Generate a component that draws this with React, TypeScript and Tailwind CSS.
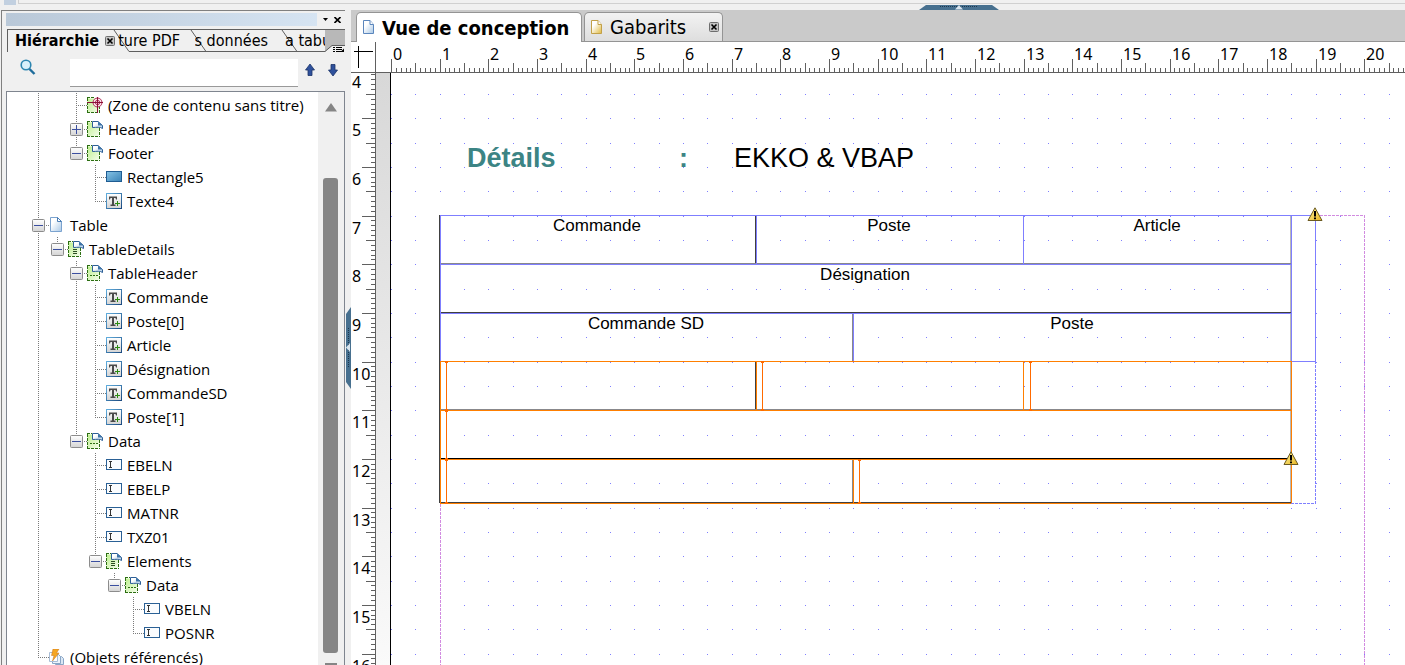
import React from "react";

type IconKind = "zone" | "subform" | "page" | "table" | "row" | "rect" | "text" | "field" | "refs";
type Toggle = "plus" | "minus";

interface TreeNode {
  label: string;
  depth: number;
  icon: IconKind;
  toggle?: Toggle;
  last?: boolean;
  through: number[];
}

const NODES: TreeNode[] = [
  { label: "(Zone de contenu sans titre)", depth: 2, icon: "zone", through: [0] },
  { label: "Header", depth: 2, icon: "subform", toggle: "plus", through: [0] },
  { label: "Footer", depth: 2, icon: "subform", toggle: "minus", last: true, through: [0] },
  { label: "Rectangle5", depth: 3, icon: "rect", through: [0] },
  { label: "Texte4", depth: 3, icon: "text", last: true, through: [0] },
  { label: "Table", depth: 0, icon: "page", toggle: "minus", through: [] },
  { label: "TableDetails", depth: 1, icon: "table", toggle: "minus", last: true, through: [0] },
  { label: "TableHeader", depth: 2, icon: "row", toggle: "minus", through: [0] },
  { label: "Commande", depth: 3, icon: "text", through: [0, 2] },
  { label: "Poste[0]", depth: 3, icon: "text", through: [0, 2] },
  { label: "Article", depth: 3, icon: "text", through: [0, 2] },
  { label: "Désignation", depth: 3, icon: "text", through: [0, 2] },
  { label: "CommandeSD", depth: 3, icon: "text", through: [0, 2] },
  { label: "Poste[1]", depth: 3, icon: "text", last: true, through: [0, 2] },
  { label: "Data", depth: 2, icon: "row", toggle: "minus", last: true, through: [0] },
  { label: "EBELN", depth: 3, icon: "field", through: [0] },
  { label: "EBELP", depth: 3, icon: "field", through: [0] },
  { label: "MATNR", depth: 3, icon: "field", through: [0] },
  { label: "TXZ01", depth: 3, icon: "field", through: [0] },
  { label: "Elements", depth: 3, icon: "table", toggle: "minus", last: true, through: [0] },
  { label: "Data", depth: 4, icon: "row", toggle: "minus", last: true, through: [0] },
  { label: "VBELN", depth: 5, icon: "field", through: [0] },
  { label: "POSNR", depth: 5, icon: "field", last: true, through: [0] },
  { label: "(Objets référencés)", depth: 0, icon: "refs", last: true, through: [] },
];

function Defs() {
  return (
    <svg className="absolute h-0 w-0" aria-hidden="true">
      <defs>
        <linearGradient id="green" x1="0" y1="0" x2="1" y2="1">
          <stop offset="0" stopColor="#bdf08c" />
          <stop offset="1" stopColor="#f6fdee" />
        </linearGradient>
        <linearGradient id="sheet" x1="0" y1="0" x2="1" y2="1">
          <stop offset="0.3" stopColor="#ffffff" />
          <stop offset="1" stopColor="#a9c8e6" />
        </linearGradient>
        <linearGradient id="gold" x1="0" y1="0" x2="1" y2="1">
          <stop offset="0.3" stopColor="#ffffff" />
          <stop offset="1" stopColor="#e0b93c" />
        </linearGradient>
        <linearGradient id="blue" x1="0" y1="0" x2="1" y2="1">
          <stop offset="0" stopColor="#86c3e6" />
          <stop offset="1" stopColor="#3a82b6" />
        </linearGradient>
        <linearGradient id="frame" x1="0" y1="0" x2="1" y2="1">
          <stop offset="0" stopColor="#62aede" />
          <stop offset="1" stopColor="#1b4a80" />
        </linearGradient>
        <linearGradient id="silver" x1="0" y1="0" x2="0" y2="1">
          <stop offset="0" stopColor="#ffffff" />
          <stop offset="1" stopColor="#d4d4d4" />
        </linearGradient>
        <linearGradient id="warn" x1="0" y1="0" x2="1" y2="1">
          <stop offset="0" stopColor="#fff7a0" />
          <stop offset="1" stopColor="#e8b420" />
        </linearGradient>
      </defs>
    </svg>
  );
}

function SubformBase() {
  return (
    <>
      <rect x="0.5" y="1.5" width="12" height="14" fill="url(#green)" />
      <path d="M0 .5H5M.5 1V16M0 15.5H13M12.5 7V15" fill="none" stroke="#2c6e12" strokeDasharray="3 1" shapeRendering="crispEdges" />
      <path d="M5.500 .5H11L15.500 4.500V7.500C13 5.500 10 6.500 5.500 6.500Z" fill="url(#sheet)" stroke="#2d5f96" />
      <path d="M11 .5V4.500H15.500Z" fill="#3d74a8" />
    </>
  );
}

function NodeIcon({ kind }: { kind: IconKind }) {
  return (
    <svg width="16" height="17" viewBox="0 0 16 17" aria-hidden="true" className="shrink-0">
      {kind === "zone" && (
        <>
          <rect x="0.5" y="1.5" width="12" height="14" fill="url(#green)" />
          <path d="M0 .5H7M.5 1V16M0 15.5H13M12.5 9V15" fill="none" stroke="#2c6e12" strokeDasharray="3 1" shapeRendering="crispEdges" />
          <circle cx="10.500" cy="5.500" r="4.500" fill="#f8e3ea" stroke="#b03058" />
          <circle cx="10.500" cy="5.500" r="2.200" fill="none" stroke="#b03058" />
          <path d="M0 5.500H16M10.500 0V16" stroke="#8c1038" fill="none" />
        </>
      )}
      {(kind === "subform" || kind === "table" || kind === "row") && <SubformBase />}
      {kind === "row" && <path d="M3 10.5H5M6 10.5H8M9 10.5H11" stroke="#2c6e12" shapeRendering="crispEdges" />}
      {kind === "table" && (
        <path d="M5 8.5H9M5 10.5H9M5 12.5H9" stroke="#2c4e22" shapeRendering="crispEdges" />
      )}
      {kind === "page" && (
        <>
          <path d="M1.500 .5H8.500L12.500 4.500V14.500H1.500Z" fill="url(#sheet)" stroke="#7ba3cf" />
          <path d="M8.500 .5V4.500H12.500Z" fill="#ffffff" stroke="#4a7db5" />
        </>
      )}
      {kind === "rect" && <rect x="0.5" y="2.500" width="15" height="10" fill="url(#blue)" stroke="#1f5c92" />}
      {kind === "text" && (
        <>
          <rect x="0.5" y="0.5" width="15" height="15" fill="url(#silver)" stroke="url(#frame)" />
          <path d="M3 3.500H11V6.500H10L9.500 5H8V11.500H9.500V13H4.500V11.500H6V5H4.500L4 6.500H3Z" fill="#4a4a4a" />
          <path d="M11.500 8V13M9 10.500H14" stroke="#2b8a10" fill="none" shapeRendering="crispEdges" />
        </>
      )}
      {kind === "field" && (
        <>
          <rect x="0.5" y="2.500" width="15" height="10" fill="#fafcfe" stroke="#2a6095" />
          <path d="M3 4.500H6M3 10.500H6M4.500 5V10" stroke="#333333" fill="none" shapeRendering="crispEdges" />
        </>
      )}
      {kind === "refs" && (
        <>
          <path d="M6.500 7.500H12.500L14.500 9.500V15.500H6.500Z" fill="#dbe8f5" stroke="#8aa6c6" />
          <path d="M3.500 5.500H9.500L11.500 7.500V14.500H3.500Z" fill="#edf4fb" stroke="#8aa6c6" />
          <path d="M.5 3.500H6L8.500 6V12.500H.5Z" fill="#ffffff" stroke="#a8bdd6" />
          <path d="M4 0H10L7.500 4H10L3.500 12L5 6.500H2.500Z" fill="#f5a623" stroke="#c9731a" strokeWidth="0.5" />
        </>
      )}
    </svg>
  );
}

function Guide({ on }: { on: boolean }) {
  return (
    <svg width="19" height="24" aria-hidden="true" className="shrink-0">
      {on && <path d="M9.500 0V24" stroke="#7a7a7a" strokeDasharray="1 1" shapeRendering="crispEdges" />}
    </svg>
  );
}

function Junction({ node }: { node: TreeNode }) {
  const drawing = (
    <svg width="20" height="24" aria-hidden="true">
      <path
        d={`M9.500 0V${node.last ? 12 : 24}M9 12.500H20`}
        fill="none"
        stroke="#7a7a7a"
        strokeDasharray="1 1"
        shapeRendering="crispEdges"
      />
      {node.toggle && (
        <>
          <rect x="3.500" y="6.500" width="12" height="12" rx="1" fill="url(#silver)" stroke="#8c8c8c" />
          <path d={node.toggle === "plus" ? "M5 12.500H14M9.500 8V17" : "M5 12.500H14"} stroke="#3b4fa0" fill="none" />
        </>
      )}
    </svg>
  );
  return node.toggle ? (
    <button type="button" aria-label={node.toggle === "plus" ? `Développer ${node.label}` : `Réduire ${node.label}`} className="shrink-0">
      {drawing}
    </button>
  ) : (
    <span className="shrink-0">{drawing}</span>
  );
}

function Tree() {
  return (
    <ul role="tree" aria-label="Hiérarchie" className="min-w-0 flex-1 pt-px pl-[22px] font-['Open_Sans','Noto_Sans',sans-serif] text-[15px] whitespace-nowrap">
      {NODES.map((node, i) => (
        <li key={i} role="treeitem" aria-level={node.depth + 1} className="flex h-6 items-center">
          {Array.from({ length: node.depth }, (_, level) => (
            <Guide key={level} on={node.through.includes(level)} />
          ))}
          <Junction node={node} />
          <NodeIcon kind={node.icon} />
          <span className="pl-[5px]">{node.label}</span>
        </li>
      ))}
    </ul>
  );
}

function CloseBox() {
  return (
    <svg width="10" height="10" viewBox="0 0 10 10" aria-hidden="true">
      <rect x="0.5" y="0.5" width="9" height="9" rx="1" fill="#c4c4c4" stroke="#6e6e6e" />
      <path d="M2.500 2.500L7.500 7.500M7.500 2.500L2.500 7.500" stroke="#000000" strokeWidth="1.6" />
    </svg>
  );
}

function Sidebar() {
  return (
    <aside className="ml-px flex w-[344px] shrink-0 flex-col border-t border-l border-[#808080] bg-[#f0f0f0] pl-1">
      <div className="mt-0.5 flex h-[13px] items-center">
        <div className="h-full flex-1 bg-linear-to-r from-[#b9c8d8] to-[#d6e4f2]" />
        <button type="button" aria-label="Options du panneau" className="ml-1.5">
          <svg width="5" height="3" aria-hidden="true"><path d="M0 0H5L2.500 3Z" /></svg>
        </button>
        <button type="button" aria-label="Fermer le panneau" className="mr-1 ml-1.5">
          <svg width="7" height="6" viewBox="0 0 7 6" aria-hidden="true"><path d="M.5 0L6.500 6M6.500 0L.5 6" stroke="#000000" strokeWidth="1.6" /></svg>
        </button>
      </div>

      <div className="relative mt-[3px] ml-px flex h-[23px] overflow-hidden border-t border-[#5f5f5f] bg-[#f0f0f0] font-['DejaVu_Sans_Condensed','Noto_Sans',sans-serif] text-base whitespace-nowrap">
        <svg className="absolute inset-0 h-full w-full" aria-hidden="true">
          <path d="M318 0H345V16L326 15L318 22Z" fill="#b8b8b8" />
          <path d="M.5 0V22" stroke="#5f5f5f" />
          <path d="M107 0L122 21.500H318L325 15.500H345M184 0L199 21.500M275 0L290 21.500" fill="none" stroke="#5f5f5f" />
          <path d="M326 17.500H328M329 17.500H335M326 19.500H328M329 19.500H335M326 21.500H328M329 21.500H335" stroke="#000000" shapeRendering="crispEdges" />
          <path d="M337 22V18.500L333.500 22Z" />
        </svg>
        <button type="button" className="relative flex w-[111px] items-center pl-2 font-bold">
          Hiérarchie
        </button>
        <button type="button" className="relative flex w-[62px] items-center justify-end overflow-hidden">ture PDF</button>
        <button type="button" className="relative ml-[15px] flex w-[73px] items-center justify-end overflow-hidden">s données</button>
        <button type="button" className="relative ml-[17px] flex w-[40px] items-center overflow-hidden">a tabu</button>
        <button type="button" aria-label="Fermer Hiérarchie" className="absolute top-1.5 left-[98px]">
          <CloseBox />
        </button>
      </div>

      <div className="flex h-[39px] items-center">
        <svg width="16" height="17" viewBox="0 0 16 17" className="mb-2 ml-[14px]" aria-hidden="true">
          <circle cx="6" cy="6" r="4.800" fill="#d8f0fa" stroke="#2d86b0" strokeWidth="1.600" />
          <path d="M9.500 10L14.500 15" stroke="#1f6d9c" strokeWidth="2.400" />
        </svg>
        <input aria-label="Rechercher" className="mt-0.5 ml-[34px] h-7 w-[228px] border-b border-[#999999] bg-white px-2 outline-none" />
        <button type="button" aria-label="Précédent" className="mb-1 ml-[7px]">
          <svg width="10" height="12" aria-hidden="true"><path d="M5 0L9.500 6H7V11.500H3V6H.5Z" fill="#2f519c" stroke="#1c3268" strokeWidth="0.800" /></svg>
        </button>
        <button type="button" aria-label="Suivant" className="mb-1 ml-[13px]">
          <svg width="10" height="12" aria-hidden="true"><path d="M5 12L9.500 6H7V.5H3V6H.5Z" fill="#2f519c" stroke="#1c3268" strokeWidth="0.800" /></svg>
        </button>
      </div>

      <div className="flex min-h-0 flex-1 overflow-hidden border border-b-0 border-[#7f858f] bg-white">
        <Tree />
        <div className="flex w-[26px] shrink-0 flex-col items-center bg-[#f0f0f0] pt-[11px] pr-px" aria-hidden="true">
          <svg width="12" height="9"><path d="M6 0L12 8.500H0Z" fill="#858585" /></svg>
          <div className="mt-[66px] mb-2.5 w-[15px] flex-1 rounded-[3px] bg-[#858585]" />
          <svg width="12" height="2"><path d="M0 0H12V2H0Z" fill="#858585" /></svg>
        </div>
      </div>
    </aside>
  );
}

function Splitter() {
  return (
    <div className="flex w-[6px] shrink-0 flex-col items-end bg-[#f0f0f0]">
      <svg width="5" height="82" viewBox="0 0 5 82" className="mt-[297px]" aria-hidden="true">
        <path d="M5 0L0 7V75L5 82Z" fill="#47708f" />
        <path d="M2.500 21V60" stroke="#1c3850" strokeDasharray="1 1" />
        <path d="M4 36V45L0 40.500Z" fill="#d8e4ee" />
      </svg>
    </div>
  );
}

const UNIT = 48.66;

const across = (distance: number) => Math.round(distance);
const down = (distance: number) => Math.floor(distance + 0.1);

function tickPath(count: number, snap: (distance: number) => number, draw: (pos: number, size: number) => string) {
  let path = "";
  for (let i = 0; i < count; i++) {
    const size = i % 10 === 0 ? 13 : i % 5 === 0 ? 9 : 4;
    path += draw(snap((i * UNIT) / 10) + 0.5, size);
  }
  return path;
}

function HorizontalRuler() {
  return (
    <svg className="h-[31px] min-w-0 flex-1 border-b border-l border-[#606060]" aria-label="Règle horizontale">
      <g transform="translate(15 0)">
        <path d={tickPath(600, across, (p, s) => `M${p} 30V${30 - s}`)} stroke="#606060" shapeRendering="crispEdges" />
        {Array.from({ length: 21 }, (_, i) => (
          <text key={i} x={across(i * UNIT) + 2} y="18" fontSize="16">{i}</text>
        ))}
      </g>
    </svg>
  );
}

function VerticalRuler() {
  return (
    <svg className="w-[25px] shrink-0 border-r border-[#606060]" aria-label="Règle verticale">
      <g transform="translate(0 -3)">
        <path d={tickPath(500, down, (p, s) => `M24 ${p}H${24 - s}`)} stroke="#606060" shapeRendering="crispEdges" />
        {Array.from({ length: 13 }, (_, i) => (
          <text key={i} x="1" y={down(i * UNIT) + 18} fontSize="16">{i + 4}</text>
        ))}
      </g>
    </svg>
  );
}

function gridDots() {
  let path = "";
  for (let row = 1; row < 50; row++) {
    for (let col = 0; col < 100; col++) {
      path += `M${across((col * UNIT) / 2)} ${down((row * UNIT) / 2) - 2.5}h1`;
    }
  }
  return path;
}

const DOTS = gridDots();

function Warning({ className }: { className: string }) {
  return (
    <svg width="16" height="15" viewBox="0 0 16 15" className={className} role="img" aria-label="Avertissement">
      <path d="M8 .8L15 13.500H1Z" fill="url(#warn)" stroke="#6b5a20" strokeLinejoin="round" />
      <path d="M8 4V9.500M8 10.500V12.300" stroke="#000000" strokeWidth="2" />
    </svg>
  );
}

function FormLines() {
  return (
    <svg className="absolute inset-0 h-full w-full" shapeRendering="crispEdges" fill="none" aria-hidden="true">
      <path d={DOTS} stroke="#7f7fff" />
      <path d="M925 142.500H973.500V2000M49.500 431V2000" stroke="#d18be0" strokeDasharray="3 1" />
      <path d="M924.500 288V430.500H900" stroke="#7f7fff" strokeDasharray="3 1" />
      <path d="M899.500 143V430" stroke="#b8b8b8" />
      <path d="M49 190.500H900M461.500 241V288M461.500 387V429M49 336.500H900" stroke="#88888c" />
      <path d="M48.500 142V430M364.500 143V190M364.500 289V336M49 239.500H900M49 429.500H900" stroke="#404040" />
      <path d="M49 385.500H900" stroke="#000000" />
      <path
        d="M49 142.500H924.500V288.500H900M49.500 142V288M365.500 143V191M632.500 143V191M900.500 143V288M49 191.500H900M49 240.500H900M462.500 240V288"
        stroke="#7f7fff"
      />
      <path
        d="M49 288.500H900.500V430M49.500 288V430.500H900M49 337.500H900M49 386.500H900M365.500 289V337M632.500 289V337M462.500 386V430"
        stroke="#ff7f00"
      />
      <path d="M55.500 288V430M371.500 288V337M639.500 288V337M468.500 386V430" stroke="#ff6a00" />
      <path
        d="M54 289H57M370 289H373M638 289H641M467 387H470M370 337H373M638 337H641M54 430H57M467 430H470"
        stroke="#ff6a00"
        strokeWidth="2"
      />
      <path d="M54 337.500H57M54 386.500H57" stroke="#ff6a00" strokeWidth="3" />
    </svg>
  );
}

function FormPage() {
  return (
    <div className="relative min-w-0 flex-1 overflow-hidden border-l border-black bg-white font-['Liberation_Sans',Arial,sans-serif] text-[17px] leading-5 text-black">
      <FormLines />
      <div className="absolute top-[69px] left-[76px] flex text-[27px] leading-8">
        <span className="w-[212px] font-bold text-[#3c8484]">Détails</span>
        <span className="w-[55px] font-bold text-[#3c8484]">:</span>
        <span>EKKO &amp; VBAP</span>
      </div>
      <div className="absolute top-[143px] left-12 w-[852px] text-center">
        <div className="flex h-[49px]">
          <div className="w-[316px]">Commande</div>
          <div className="w-[268px]">Poste</div>
          <div className="flex-1">Article</div>
        </div>
        <div className="h-[49px]">Désignation</div>
        <div className="flex h-[49px]">
          <div className="w-[414px]">Commande SD</div>
          <div className="flex-1">Poste</div>
        </div>
      </div>
      <Warning className="absolute top-[134px] left-[916px]" />
      <Warning className="absolute top-[378px] left-[892px]" />
    </div>
  );
}

function SheetIcon({ gold }: { gold?: boolean }) {
  return (
    <svg width="12" height="15" viewBox="0 0 12 15" aria-hidden="true">
      <path d="M.5 .5H7L10.500 4.500V13.500H.5Z" fill={gold ? "url(#gold)" : "url(#sheet)"} stroke={gold ? "#c2a048" : "#5b86bd"} />
      <path d="M7 .5V4.500H10.500" fill="#ffffff" stroke={gold ? "#c2a048" : "#5b86bd"} />
    </svg>
  );
}

function Workspace() {
  return (
    <main className="flex min-w-0 flex-1 flex-col bg-white">
      <div className="flex h-8 items-end border-b border-[#949494] bg-[#cacaca] font-['DejaVu_Sans_Condensed','Noto_Sans',sans-serif] text-xl text-black">
        <button type="button" className="-mb-px ml-[5px] flex h-[30px] w-[226px] items-center gap-[7px] rounded-t-[5px] border border-b-0 border-[#949494] bg-white pl-1.5 font-bold whitespace-nowrap">
          <SheetIcon />
          Vue de conception
        </button>
        <div className="ml-0.5 flex h-[29px] w-[139px] items-center rounded-t-[5px] border border-b-0 border-[#949494] bg-linear-to-b from-[#f2f2f2] to-[#dedede] pr-[3px] pl-1.5">
          <button type="button" className="flex flex-1 items-center gap-[7px]">
            <SheetIcon gold />
            Gabarits
          </button>
          <button type="button" aria-label="Fermer Gabarits">
            <CloseBox />
          </button>
        </div>
      </div>
      <div className="flex">
        <svg width="24" height="31" className="shrink-0 border-b border-[#606060]" aria-hidden="true">
          <path d="M3 9.500H22M7.500 4V26" stroke="#000000" shapeRendering="crispEdges" />
        </svg>
        <HorizontalRuler />
      </div>
      <div className="flex min-h-0 flex-1">
        <VerticalRuler />
        <div className="w-[14px] shrink-0 bg-linear-to-b from-[#d8d8d8] to-[#fafafa]" />
        <FormPage />
      </div>
    </main>
  );
}

export default function App() {
  return (
    <div className="flex h-screen flex-col overflow-hidden bg-[#f0f0f0] font-['Noto_Sans','Open_Sans',sans-serif] text-black">
      <Defs />
      <header className="flex h-2.5 shrink-0 items-start">
        <div className="ml-1 h-[5px] w-3 bg-[#c2d0e0]" />
        <div className="ml-0.5 h-1 flex-1 border-b border-l border-[#d0d0d0]" />
        <svg width="80" height="5" viewBox="0 0 80 5" className="absolute top-[5px] left-[919px]" aria-hidden="true">
          <path d="M0 5L7 0H73L80 5Z" fill="#47708f" />
          <path d="M21 1.500H59" stroke="#1c3850" strokeDasharray="1 1" />
          <path d="M36 4.500L40 0L44 4.500Z" fill="#d8e4ee" />
        </svg>
      </header>
      <div className="flex min-h-0 flex-1">
        <Sidebar />
        <Splitter />
        <Workspace />
      </div>
    </div>
  );
}
